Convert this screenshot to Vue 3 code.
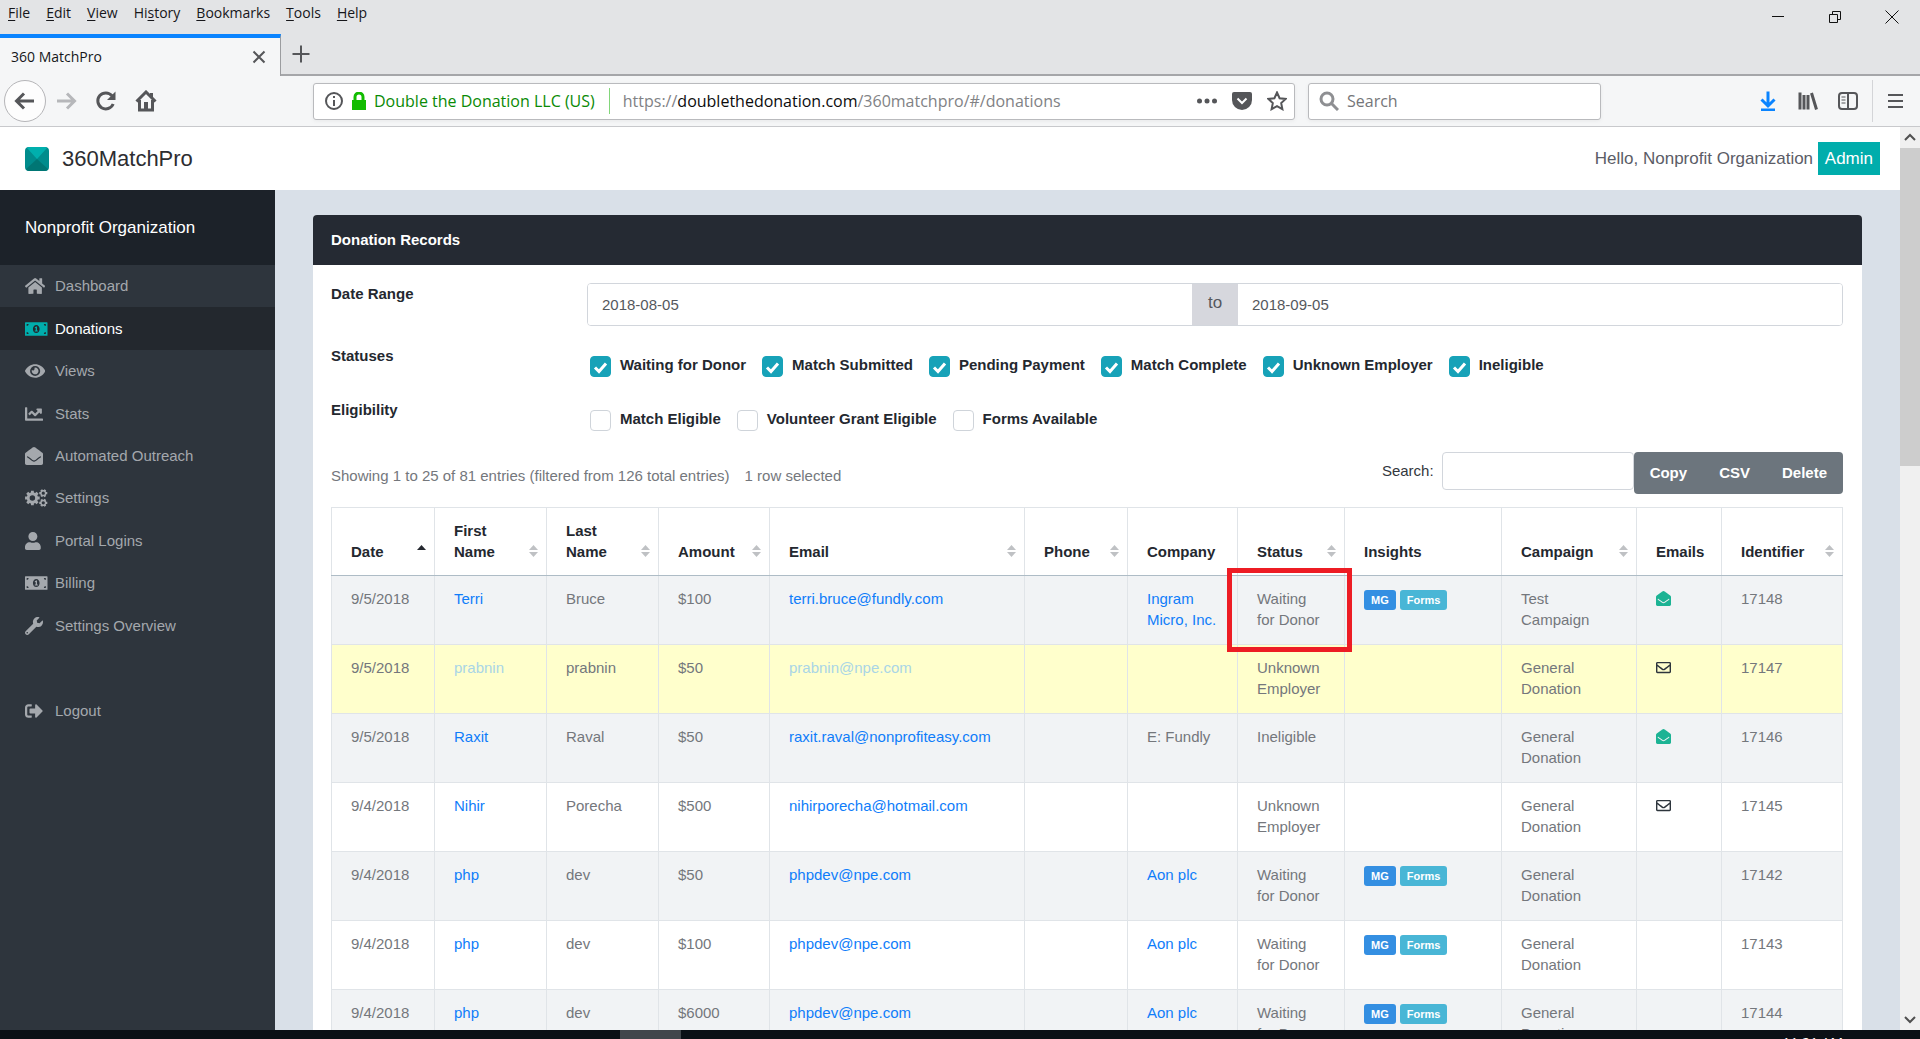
<script setup>
import { ref } from 'vue'

const menus = [
  ['', 'F', 'ile'], ['', 'E', 'dit'], ['', 'V', 'iew'], ['Hi', 's', 'tory'],
  ['', 'B', 'ookmarks'], ['', 'T', 'ools'], ['', 'H', 'elp'],
]

// Outline of a toothed wheel with a round hole, for the settings icon
function gear(cx, cy, r, teeth, hole) {
  const inner = r * 0.76
  const pts = []
  for (let i = 0; i < teeth; i++) {
    const a = (i * 2 * Math.PI) / teeth
    const s = (2 * Math.PI) / teeth
    for (const [rad, off] of [[inner, -0.34], [r, -0.24], [r, 0.24], [inner, 0.34]]) {
      pts.push(`${(cx + rad * Math.cos(a + off * s)).toFixed(1)} ${(cy + rad * Math.sin(a + off * s)).toFixed(1)}`)
    }
  }
  return `M${pts.join('L')}ZM${cx - hole} ${cy}a${hole} ${hole} 0 1 0 ${2 * hole} 0a${hole} ${hole} 0 1 0 ${-2 * hole} 0Z`
}

const billPath = 'M16 64H624Q640 64 640 80V432Q640 448 624 448H16Q0 448 0 432V80Q0 64 16 64ZM48 112V170Q100 165 105 112ZM592 112V170Q540 165 535 112ZM48 400V342Q100 347 105 400ZM592 400V342Q540 347 535 400ZM320 140C265 140 225 190 225 256S265 372 320 372 415 322 415 256 375 140 320 140ZM280 205L320 185H342V300H365V326H278V300H304V224L280 232Z'

const icons = {
  home: { w: 576, d: 'M280.37 148.26L96 300.11V464a16 16 0 0 0 16 16l112.06-.29a16 16 0 0 0 15.92-16V368a16 16 0 0 1 16-16h64a16 16 0 0 1 16 16v95.64a16 16 0 0 0 16 16.05L464 480a16 16 0 0 0 16-16V300L295.67 148.26a12.19 12.19 0 0 0-15.3 0zM571.6 251.47L488 182.56V44.05a12 12 0 0 0-12-12h-56a12 12 0 0 0-12 12v72.61L318.47 43a48 48 0 0 0-61 0L4.34 251.47a12 12 0 0 0-1.6 16.9l25.5 31A12 12 0 0 0 45.15 301l235.22-193.74a12.19 12.19 0 0 1 15.3 0L530.9 301a12 12 0 0 0 16.9-1.6l25.5-31a12 12 0 0 0-1.7-16.93z' },
  bill: { w: 640, d: billPath },
  eye: { w: 576, d: 'M572.52 241.4C518.29 135.59 410.93 64 288 64S57.68 135.64 3.48 241.41a32.35 32.35 0 0 0 0 29.19C57.71 376.41 165.07 448 288 448s230.32-71.64 284.52-177.41a32.35 32.35 0 0 0 0-29.19zM288 400a144 144 0 1 1 144-144 143.93 143.93 0 0 1-144 144zm0-240a95.31 95.31 0 0 0-25.31 3.79 47.85 47.85 0 0 1-66.9 66.9A95.78 95.78 0 1 0 288 160z' },
  chart: { w: 512, d: 'M496 384H64V80c0-8.84-7.16-16-16-16H16C7.16 64 0 71.16 0 80v336c0 17.67 14.33 32 32 32h464c8.84 0 16-7.16 16-16v-32c0-8.84-7.16-16-16-16zM464 96H345.94c-21.38 0-32.09 25.85-16.97 40.97l32.4 32.4L288 242.75l-73.37-73.37c-12.5-12.5-32.76-12.5-45.25 0l-68.69 68.69c-6.25 6.25-6.25 16.38 0 22.63l22.62 22.62c6.25 6.25 16.38 6.25 22.63 0L192 237.25l73.37 73.37c12.5 12.5 32.76 12.5 45.25 0l96-96 32.4 32.4c15.12 15.12 40.97 4.41 40.97-16.97V112c.01-8.84-7.15-16-15.99-16z' },
  mailOpen: { w: 512, d: 'M512 464c0 26.51-21.49 48-48 48H48c-26.51 0-48-21.49-48-48V200.724a48 48 0 0 1 18.387-37.776c24.913-19.529 45.501-35.365 164.2-121.511C199.412 29.17 232.797-.347 256 .003c23.198-.354 56.596 29.172 73.413 41.433 118.687 86.137 139.303 101.995 164.2 121.512A48 48 0 0 1 512 200.724V464zm-65.666-196.605c-2.563-3.728-7.7-4.595-11.339-1.907-22.845 16.873-55.462 40.705-105.582 77.079-16.825 12.266-50.21 41.781-73.413 41.43-23.211.344-56.559-29.143-73.413-41.43-50.114-36.37-82.734-60.204-105.582-77.079-3.639-2.688-8.776-1.821-11.339 1.907l-9.072 13.196a7.998 7.998 0 0 0 1.839 10.967c22.887 16.899 55.454 40.69 105.303 76.868 20.274 14.781 56.524 47.813 92.264 47.573 35.724.242 71.961-32.771 92.263-47.573 49.85-36.179 82.418-59.97 105.303-76.868a7.998 7.998 0 0 0 1.839-10.967l-9.071-13.196z' },
  mail: { w: 512, d: 'M464 64H48C21.49 64 0 85.49 0 112v288c0 26.51 21.49 48 48 48h416c26.51 0 48-21.49 48-48V112c0-26.51-21.49-48-48-48zm0 48v40.805c-22.422 18.259-58.168 46.651-134.587 106.49-16.841 13.247-50.201 45.072-73.413 44.701-23.208.375-56.579-31.459-73.413-44.701C106.18 199.465 70.425 171.067 48 152.805V112h416zM48 400V214.398c22.914 18.251 55.409 43.862 104.938 82.646 21.857 17.205 60.134 55.186 103.062 54.955 42.717.231 80.509-37.199 103.053-54.947 49.528-38.783 82.032-64.401 104.947-82.653V400H48z' },
  cogs: { w: 640, d: gear(210, 256, 212, 8, 78) + gear(520, 118, 118, 6, 46) + gear(520, 394, 118, 6, 46) },
  user: { w: 448, d: 'M224 256c70.7 0 128-57.3 128-128S294.7 0 224 0 96 57.3 96 128s57.3 128 128 128zm89.6 32h-16.7c-22.2 10.2-46.9 16-72.9 16s-50.6-5.8-72.9-16h-16.7C60.2 288 0 348.2 0 422.4V464c0 26.5 21.5 48 48 48h352c26.5 0 48-21.5 48-48v-41.6c0-74.2-60.2-134.4-134.4-134.4z' },
  wrench: { w: 512, d: 'M507.73 109.1c-2.24-9.03-13.54-12.09-20.12-5.51l-74.36 74.36-67.88-11.31-11.31-67.88 74.36-74.36c6.62-6.62 3.43-17.9-5.66-20.16-47.38-11.74-99.55.91-136.58 37.93-39.64 39.64-50.55 97.1-34.05 147.2L18.74 402.76c-24.99 24.99-24.99 65.51 0 90.5 24.99 24.99 65.51 24.99 90.5 0l213.21-213.21c50.12 16.71 107.47 5.68 147.37-34.22 37.07-37.07 49.7-89.32 37.91-136.73zM64 472c-13.25 0-24-10.75-24-24 0-13.26 10.75-24 24-24s24 10.74 24 24c0 13.25-10.75 24-24 24z' },
  logout: { w: 512, d: 'M497 273L329 441c-15 15-41 4.5-41-17v-96H152c-13.3 0-24-10.7-24-24v-96c0-13.3 10.7-24 24-24h136V88c0-21.4 25.9-32 41-17l168 168c9.3 9.4 9.3 24.6 0 34zM192 436v-40c0-6.6-5.4-12-12-12H96c-17.7 0-32-14.3-32-32V160c0-17.7 14.3-32 32-32h84c6.6 0 12-5.4 12-12V76c0-6.6-5.4-12-12-12H96c-53 0-96 43-96 96v192c0 53 43 96 96 96h84c6.6 0 12-5.4 12-12z' },
}

const nav = [
  { label: 'Dashboard', icon: 'home' },
  { label: 'Donations', icon: 'bill', active: true },
  { label: 'Views', icon: 'eye' },
  { label: 'Stats', icon: 'chart' },
  { label: 'Automated Outreach', icon: 'mailOpen' },
  { label: 'Settings', icon: 'cogs' },
  { label: 'Portal Logins', icon: 'user' },
  { label: 'Billing', icon: 'bill' },
  { label: 'Settings Overview', icon: 'wrench' },
  null,
  { label: 'Logout', icon: 'logout' },
]

const dateFrom = ref('2018-08-05')
const dateTo = ref('2018-09-05')
const tableSearch = ref('')

const statuses = ref(['Waiting for Donor', 'Match Submitted', 'Pending Payment', 'Match Complete', 'Unknown Employer', 'Ineligible'].map((label) => ({ label, on: true })))
const eligibility = ref(['Match Eligible', 'Volunteer Grant Eligible', 'Forms Available'].map((label) => ({ label, on: false })))

const columns = [
  { label: 'Date', cls: 'c-date', sort: 'asc' },
  { label: 'First Name', cls: 'c-name', sort: 'both' },
  { label: 'Last Name', cls: 'c-name', sort: 'both' },
  { label: 'Amount', cls: 'c-amount', sort: 'both' },
  { label: 'Email', cls: 'c-email', sort: 'both' },
  { label: 'Phone', cls: 'c-phone', sort: 'both' },
  { label: 'Company', cls: 'c-company' },
  { label: 'Status', cls: 'c-status', sort: 'both' },
  { label: 'Insights', cls: 'c-insights' },
  { label: 'Campaign', cls: 'c-campaign', sort: 'both' },
  { label: 'Emails', cls: 'c-emails' },
  { label: 'Identifier', cls: 'c-id', sort: 'both' },
]

const rows = [
  { date: '9/5/2018', first: 'Terri', last: 'Bruce', amount: '$100', email: 'terri.bruce@fundly.com', company: 'Ingram Micro, Inc.', link: true, status: 'Waiting for Donor', forms: true, campaign: 'Test Campaign', mail: 'mailOpen', id: '17148', marked: true },
  { date: '9/5/2018', first: 'prabnin', last: 'prabnin', amount: '$50', email: 'prabnin@npe.com', company: '', status: 'Unknown Employer', campaign: 'General Donation', mail: 'mail', id: '17147', selected: true },
  { date: '9/5/2018', first: 'Raxit', last: 'Raval', amount: '$50', email: 'raxit.raval@nonprofiteasy.com', company: 'E: Fundly', status: 'Ineligible', campaign: 'General Donation', mail: 'mailOpen', id: '17146' },
  { date: '9/4/2018', first: 'Nihir', last: 'Porecha', amount: '$500', email: 'nihirporecha@hotmail.com', company: '', status: 'Unknown Employer', campaign: 'General Donation', mail: 'mail', id: '17145' },
  { date: '9/4/2018', first: 'php', last: 'dev', amount: '$50', email: 'phpdev@npe.com', company: 'Aon plc', link: true, status: 'Waiting for Donor', forms: true, campaign: 'General Donation', id: '17142' },
  { date: '9/4/2018', first: 'php', last: 'dev', amount: '$100', email: 'phpdev@npe.com', company: 'Aon plc', link: true, status: 'Waiting for Donor', forms: true, campaign: 'General Donation', id: '17143' },
  { date: '9/4/2018', first: 'php', last: 'dev', amount: '$6000', email: 'phpdev@npe.com', company: 'Aon plc', link: true, status: 'Waiting for Donor', forms: true, campaign: 'General Donation', id: '17144' },
]
</script>

<template>
  <div class="screen">
    <header class="chrome">
      <div class="titlebar">
        <nav class="menubar">
          <button v-for="m in menus" :key="m.join('')" type="button">{{ m[0] }}<u>{{ m[1] }}</u>{{ m[2] }}</button>
        </nav>
        <div class="win-controls">
          <button type="button" aria-label="Minimize"><svg width="14" height="14" viewBox="0 0 14 14"><path d="M1 6.500h12" /></svg></button>
          <button type="button" aria-label="Restore"><svg width="14" height="14" viewBox="0 0 14 14"><path d="M1.500 4.500h8v8h-8zM4.500 4.500v-3h8v8h-3" /></svg></button>
          <button type="button" aria-label="Close"><svg width="14" height="14" viewBox="0 0 14 14"><path d="M0.500 0.500l13 13M13.500 0.500l-13 13" /></svg></button>
        </div>
      </div>

      <div class="tabs">
        <div class="tab">
          <span>360 MatchPro</span>
          <button type="button" aria-label="Close tab"><svg width="14" height="14" viewBox="0 0 14 14"><path d="M1.500 1.500l11 11M12.500 1.500l-11 11" /></svg></button>
        </div>
        <div class="tab-rest">
          <button type="button" aria-label="New tab"><svg width="18" height="18" viewBox="0 0 18 18"><path d="M9 0.500v17M0.500 9h17" /></svg></button>
        </div>
      </div>

      <div class="toolbar">
        <div class="nav-buttons">
          <button class="back" type="button" aria-label="Back"><svg width="22" height="22" viewBox="0 0 22 22"><path d="M20 11H3M10 3.500L2.500 11l7.500 7.500" /></svg></button>
          <button class="dim" type="button" aria-label="Forward"><svg width="22" height="22" viewBox="0 0 22 22"><path d="M2 11h17M12 3.500l7.500 7.500-7.500 7.500" /></svg></button>
          <button type="button" aria-label="Reload"><svg width="22" height="22" viewBox="0 0 22 22"><path d="M18.200 14A8 8 0 1 1 17 5.800" /><path class="solid" d="M20.500 1.500v8.500H12z" /></svg></button>
          <button type="button" aria-label="Home"><svg width="22" height="22" viewBox="0 0 22 22"><path d="M1.500 11.500L11 2l9.500 9.500M4.500 10v10h13V10M16.500 7V3" /><path class="solid" d="M9 12h4v8H9z" /></svg></button>
        </div>

        <div class="urlbar">
          <svg class="info" width="18" height="18" viewBox="0 0 18 18"><circle cx="9" cy="9" r="8" /><path d="M9 8v6M9 4v2" /></svg>
          <svg class="lock" width="16" height="18" viewBox="0 0 16 18"><path d="M1 8h14v10H1z" /><path class="shackle" d="M4 9V5a4 4 0 0 1 8 0v4" /></svg>
          <span class="owner">Double the Donation LLC (US)</span>
          <span class="url">https://<b>doublethedonation.com</b>/360matchpro/#/donations</span>
          <div class="url-actions">
            <button type="button" aria-label="Page actions"><svg width="20" height="20" viewBox="0 0 20 20"><g class="solid"><circle cx="2.500" cy="10" r="2.500" /><circle cx="10" cy="10" r="2.500" /><circle cx="17.500" cy="10" r="2.500" /></g></svg></button>
            <button type="button" aria-label="Save to Pocket"><svg width="20" height="20" viewBox="0 0 20 20"><path class="solid" d="M2 1h16q2 0 2 2v6a10 10 0 0 1-20 0V3q0-2 2-2z" /><path class="tick" d="M5.500 7.500L10 12l4.500-4.500" /></svg></button>
            <button type="button" aria-label="Bookmark"><svg width="20" height="20" viewBox="0 0 20 20"><path d="M10 1.500l2.600 5.700 6.100.7-4.500 4.200 1.200 6.100L10 15.200l-5.400 3 1.200-6.100L1.300 7.900l6.100-.7z" /></svg></button>
          </div>
        </div>

        <label class="searchbar">
          <svg width="20" height="20" viewBox="0 0 20 20"><circle cx="8" cy="8" r="6" /><path d="M12.500 12.500L19 19" /></svg>
          <input type="text" placeholder="Search" aria-label="Web search" />
        </label>

        <div class="tools">
          <button class="download" type="button" aria-label="Downloads"><svg width="20" height="20" viewBox="0 0 20 20"><path d="M10 0.500V14M3.500 8.500l6.500 6.500 6.500-6.500M3 19h14" /></svg></button>
          <button type="button" aria-label="Library"><svg width="20" height="20" viewBox="0 0 20 20"><path class="bold" d="M2 1.500v17M6 4v14.500M10 4v14.500M13.500 2l5 16.500" /></svg></button>
          <button type="button" aria-label="Sidebars"><svg width="20" height="20" viewBox="0 0 20 20"><rect x="1" y="2" width="18" height="16" rx="3" /><path d="M10 2v16" /><path class="thin" d="M3.500 6h4M3.500 9h4M3.500 12h4" /></svg></button>
          <button class="burger" type="button" aria-label="Menu"><svg width="18" height="18" viewBox="0 0 18 18"><path d="M1 3h15M1 9h15M1 15h15" /></svg></button>
        </div>
      </div>
    </header>

    <div class="viewport">
      <div class="page">
        <header class="site-head">
          <a class="brand" href="#">
            <svg width="24" height="24" viewBox="0 0 24 24"><rect width="24" height="24" rx="4" fill="#008c8c" /><path d="M2 1L12 12 22 1Q21 0 20 0H4Q3 0 2 1Z" fill="#00afad" /><path d="M1 22L12 12 23 22Q22 24 20 24H4Q2 24 1 22Z" fill="#007674" /></svg>
            360MatchPro
          </a>
          <div class="hello">Hello, Nonprofit Organization <a class="admin" href="#">Admin</a></div>
        </header>

        <div class="columns">
          <aside class="sidebar">
            <h2>Nonprofit Organization</h2>
            <ul>
              <li v-for="(item, i) in nav" :key="i">
                <a v-if="item" href="#" :class="{ active: item.active }">
                  <span class="nav-icon">
                    <svg height="18" :viewBox="`0 0 ${icons[item.icon].w} 512`"><path fill-rule="evenodd" :d="icons[item.icon].d" /></svg>
                  </span>
                  {{ item.label }}
                </a>
              </li>
            </ul>
          </aside>

          <main>
            <section class="card">
              <h1>Donation Records</h1>
              <div class="card-body">
                <div class="field">
                  <label for="from">Date Range</label>
                  <div class="range">
                    <input id="from" v-model="dateFrom" type="text" />
                    <span>to</span>
                    <input v-model="dateTo" type="text" aria-label="End date" />
                  </div>
                </div>
                <div class="field checks">
                  <span class="legend">Statuses</span>
                  <div class="options">
                    <label v-for="s in statuses" :key="s.label"><input v-model="s.on" type="checkbox" />{{ s.label }}</label>
                  </div>
                </div>
                <div class="field checks">
                  <span class="legend">Eligibility</span>
                  <div class="options">
                    <label v-for="s in eligibility" :key="s.label"><input v-model="s.on" type="checkbox" />{{ s.label }}</label>
                  </div>
                </div>

                <div class="table-tools">
                  <p>Showing 1 to 25 of 81 entries (filtered from 126 total entries)<span>1 row selected</span></p>
                  <div class="finder">
                    <label for="find">Search:</label>
                    <input id="find" v-model="tableSearch" type="text" />
                    <div class="actions">
                      <button type="button">Copy</button>
                      <button type="button">CSV</button>
                      <button type="button">Delete</button>
                    </div>
                  </div>
                </div>

                <table>
                  <thead>
                    <tr>
                      <th v-for="c in columns" :key="c.label" :class="c.cls">
                        <div class="th">
                          <span>{{ c.label }}</span>
                          <svg v-if="c.sort" :class="c.sort" width="9" height="12" viewBox="0 0 9 12"><path d="M0 5L4.500 0 9 5z" /><path class="down" d="M0 7h9L4.500 12z" /></svg>
                        </div>
                      </th>
                    </tr>
                  </thead>
                  <tbody>
                    <tr v-for="r in rows" :key="r.id" :class="{ selected: r.selected }">
                      <td>{{ r.date }}</td>
                      <td><a href="#">{{ r.first }}</a></td>
                      <td>{{ r.last }}</td>
                      <td>{{ r.amount }}</td>
                      <td><a href="#">{{ r.email }}</a></td>
                      <td></td>
                      <td class="company"><a v-if="r.link" href="#">{{ r.company }}</a><template v-else>{{ r.company }}</template></td>
                      <td class="status">{{ r.status }}<span v-if="r.marked" class="marker"></span></td>
                      <td>
                        <div v-if="r.forms" class="badges"><span class="mg">MG</span><span class="forms">Forms</span></div>
                      </td>
                      <td>{{ r.campaign }}</td>
                      <td>
                        <svg v-if="r.mail" class="mail" :class="r.mail" width="15" height="15" viewBox="0 0 512 512"><path :d="icons[r.mail].d" /></svg>
                      </td>
                      <td>{{ r.id }}</td>
                    </tr>
                  </tbody>
                </table>
              </div>
            </section>
          </main>
        </div>
      </div>

      <div class="scrollbar">
        <svg width="20" height="21" viewBox="0 0 20 21"><path d="M5 13l5-5 5 5" /></svg>
        <div class="thumb"></div>
        <svg width="20" height="21" viewBox="0 0 20 21"><path d="M5 8l5 5 5-5" /></svg>
      </div>
    </div>

    <footer class="taskbar">
      <span class="task"></span>
      <time>11:21 AM</time>
    </footer>
  </div>
</template>

<style>
body {
  margin: 0;
}
</style>

<style scoped>
* {
  box-sizing: border-box;
}
.screen {
  display: flex;
  flex-direction: column;
  height: 100vh;
  overflow: hidden;
  font-family: "Liberation Sans", Arial, sans-serif;
  font-size: 15px;
  line-height: 22px;
  color: #74777c;
  background: #fff;
}
button {
  border: 0;
  padding: 0;
  background: none;
  font: inherit;
  color: inherit;
}
input {
  font: inherit;
  color: inherit;
}
a {
  color: #0f7dfa;
  text-decoration: none;
}
svg {
  display: block;
}

/* Browser window */
.chrome {
  flex: none;
  font-family: "Open Sans", "Noto Sans", sans-serif;
  color: #16161a;
  background: #e3e4e6;
}
.chrome svg {
  fill: none;
  stroke: #555659;
  stroke-width: 2;
}
.chrome .solid {
  fill: #555659;
  stroke: none;
}
.titlebar {
  display: flex;
  justify-content: space-between;
  height: 34px;
}
.menubar {
  display: flex;
  gap: 16px;
  padding: 2px 0 0 8px;
  height: 24px;
  font-size: 14px;
}
.menubar u {
  text-underline-offset: 2px;
}
.win-controls {
  display: flex;
  gap: 43px;
  padding: 0 21px 0 0;
}
.win-controls svg {
  stroke: #111;
  stroke-width: 1;
}
.tabs {
  display: flex;
  height: 42px;
}
.tab {
  display: flex;
  align-items: center;
  justify-content: space-between;
  flex: none;
  width: 281px;
  padding: 0 14px 0 11px;
  border-top: 4px solid #0a84ff;
  border-right: 1px solid #9b9c9f;
  background: #f5f6f7;
  font-size: 14px;
}
.tab-rest {
  display: flex;
  align-items: center;
  flex: 1;
  padding-left: 11px;
  border-bottom: 2px solid #a5a6a9;
}
.toolbar {
  display: flex;
  align-items: center;
  height: 51px;
  border-bottom: 1px solid #c8c9cc;
  background: #f5f6f7;
}
.nav-buttons {
  display: flex;
  align-items: center;
  gap: 18px;
  flex: none;
  width: 313px;
  padding-left: 4px;
}
.nav-buttons .back {
  display: grid;
  place-items: center;
  width: 42px;
  height: 42px;
  margin-right: -9px;
  border: 1px solid #b5b5b8;
  border-radius: 50%;
  background: #fdfdfd;
}
.nav-buttons svg {
  stroke-width: 3;
}
.nav-buttons .dim svg {
  stroke: #b6b7ba;
}
.urlbar,
.searchbar {
  display: flex;
  align-items: center;
  height: 37px;
  border: 1px solid #b9babd;
  border-radius: 3px;
  background: #fff;
  box-shadow: 0 1px 4px rgba(0, 0, 0, 0.06);
  font-size: 16px;
}
.urlbar {
  flex: 1;
  padding: 0 7px 0 11px;
}
.urlbar .info {
  stroke-width: 2;
}
.urlbar .lock {
  margin: 0 7px 0 8px;
  fill: #12bc00;
  stroke: none;
}
.urlbar .lock .shackle {
  fill: none;
  stroke: #12bc00;
  stroke-width: 3;
}
.owner {
  padding-right: 14px;
  border-right: 1px solid #82d67a;
  line-height: 26px;
  color: #0a8a05;
  white-space: nowrap;
}
.url {
  padding-left: 13px;
  color: #818285;
  white-space: nowrap;
}
.url b {
  font-weight: 400;
  color: #0c0c0d;
}
.url-actions {
  display: flex;
  gap: 15px;
  margin-left: auto;
}
.url-actions .tick {
  stroke: #fff;
}
.searchbar {
  flex: none;
  width: 293px;
  margin-left: 13px;
  padding-left: 10px;
}
.searchbar svg {
  stroke: #8e8f92;
  stroke-width: 3;
}
.searchbar input {
  width: 200px;
  padding: 0 0 0 8px;
  border: 0;
  outline: 0;
  background: none;
}
.searchbar input::placeholder {
  color: #757679;
  opacity: 1;
}
.tools {
  display: flex;
  align-items: center;
  justify-content: flex-end;
  gap: 20px;
  flex: none;
  width: 319px;
  padding-right: 15px;
}
.tools svg {
  stroke-width: 2;
}
.tools .bold {
  stroke-width: 3;
}
.tools .download svg {
  stroke: #0a84ff;
  stroke-width: 3;
}
.tools .thin {
  stroke-width: 1;
}
.tools .burger {
  margin-left: -6px;
  padding: 12px 0 12px 14px;
  border-left: 1px solid #d4d5d8;
}

/* Web page */
.viewport {
  display: flex;
  flex: 1;
  min-height: 0;
  overflow: hidden;
}
.page {
  display: flex;
  flex-direction: column;
  flex: 1;
  min-width: 0;
  background: #d9e0e8;
}
.site-head {
  display: flex;
  align-items: center;
  justify-content: space-between;
  flex: none;
  height: 63px;
  padding: 0 20px 0 25px;
  background: #fff;
}
.brand {
  display: flex;
  align-items: center;
  gap: 13px;
  font-size: 22px;
  color: #2d2d31;
}
.hello {
  font-size: 17px;
  color: #5b5c66;
}
.admin {
  display: inline-block;
  padding: 0 7px;
  line-height: 33px;
  color: #fff;
  background: #00adac;
}
.columns {
  display: flex;
  flex: 1;
  min-height: 0;
}
.sidebar {
  flex: none;
  width: 275px;
  background: #2e353d;
}
.sidebar h2 {
  margin: 0;
  padding: 0 25px;
  font-size: 17px;
  font-weight: 400;
  line-height: 75px;
  color: #fff;
  background: #1c2229;
}
.sidebar ul {
  display: flex;
  flex-direction: column;
  height: 467px;
  margin: 0;
  padding: 0;
  list-style: none;
}
.sidebar li {
  display: flex;
  flex: 1;
}
.sidebar a {
  display: flex;
  align-items: center;
  flex: 1;
  padding-left: 25px;
  color: #a4a8ad;
}
.sidebar a.active {
  color: #fff;
  background: #23282e;
}
.nav-icon {
  width: 30px;
}
.nav-icon svg {
  fill: currentColor;
}
.active .nav-icon {
  color: #00adac;
}
main {
  flex: 1;
  min-width: 0;
  padding: 25px 38px 0;
  overflow: hidden;
}
.card {
  border-radius: 4px 4px 0 0;
  overflow: hidden;
  background: #fff;
}
.card h1 {
  margin: 0;
  padding: 0 18px;
  font-size: 15px;
  line-height: 50px;
  color: #fff;
  background: #252a33;
}
.card-body {
  padding: 18px 19px 18px 18px;
}
.field {
  display: flex;
  height: 51px;
  font-weight: 700;
  color: #24282f;
}
.field > :first-child {
  flex: none;
  width: 256px;
}
.checks {
  height: 54px;
}
.checks .legend {
  padding-top: 11px;
}
.range {
  display: flex;
  flex: 1;
  height: 43px;
  border: 1px solid #d2d6dc;
  border-radius: 4px;
  overflow: hidden;
  font-weight: 400;
  color: #55585d;
}
.range input {
  flex: 1;
  min-width: 0;
  padding: 0 14px;
  border: 0;
  outline: 0;
}
.range span {
  width: 46px;
  font-size: 17px;
  line-height: 38px;
  text-align: center;
  background: #d6d7dd;
}
.options {
  display: flex;
  gap: 16px;
  flex: 1;
  padding: 11px 0 0 3px;
}
.options label {
  display: flex;
  height: 32px;
  padding-top: 9px;
  white-space: nowrap;
}
.options input {
  appearance: none;
  width: 21px;
  height: 21px;
  margin: 2px 9px 0 0;
  border: 1px solid #cfd4da;
  border-radius: 4px;
  background: #fff center / 17px no-repeat;
}
.options input:checked {
  border-color: #17a2b8;
  background-color: #17a2b8;
  background-image: url("data:image/svg+xml,%3Csvg xmlns='http://www.w3.org/2000/svg' viewBox='0 0 17 17'%3E%3Cpath d='M3 9.500l4 4 7-8' fill='none' stroke='%23fff' stroke-width='3'/%3E%3C/svg%3E");
}
.table-tools {
  display: flex;
  justify-content: space-between;
  height: 65px;
  padding-top: 10px;
}
.table-tools p {
  margin: 0;
  padding-top: 13px;
}
.table-tools p span {
  margin-left: 15px;
}
.finder {
  display: flex;
  align-items: flex-start;
}
.finder label {
  padding: 8px 8px 0 0;
  color: #33373d;
}
.finder input {
  width: 192px;
  height: 38px;
  border: 1px solid #d2d6dc;
  border-radius: 4px;
}
.actions {
  display: flex;
  border-radius: 4px;
  background: #6c757d;
}
.actions button {
  padding: 0 16px;
  font-weight: 700;
  line-height: 42px;
  color: #fff;
}

/* Donations table */
table {
  width: 100%;
  table-layout: fixed;
  border-collapse: collapse;
  line-height: 21px;
}
th,
td {
  height: 69px;
  padding: 12px 19px;
  border: 1px solid #e0e4e8;
  text-align: left;
  vertical-align: top;
}
th {
  height: 68px;
  padding-right: 8px;
  padding-bottom: 13px;
  border-bottom-color: #aebcc6;
  vertical-align: bottom;
  color: #24282f;
}
tbody tr:nth-child(odd) {
  background: #f1f3f5;
}
tbody tr.selected {
  background: #ffffcc;
}
.selected a {
  color: #a9d5e6;
}
.th {
  display: flex;
  align-items: flex-end;
  justify-content: space-between;
}
.th svg {
  flex: none;
  margin-bottom: 5px;
  fill: #bfc1c4;
}
.th svg.asc {
  fill: #24282f;
}
.th svg.asc .down {
  fill: none;
}
.c-date { width: 103px; }
.c-name { width: 112px; }
.c-amount { width: 111px; }
.c-phone { width: 103px; }
.c-company { width: 110px; }
.c-status { width: 107px; }
.c-insights { width: 157px; }
.c-campaign { width: 135px; }
.c-emails { width: 85px; }
.c-id { width: 121px; }
td.company {
  padding-right: 8px;
}
td.status {
  position: relative;
}
.marker {
  position: absolute;
  top: -8px;
  left: -11px;
  width: 125px;
  height: 84px;
  border: 5px solid #ed1c24;
}
.badges {
  display: flex;
  gap: 4px;
  padding-top: 2px;
}
.badges span {
  padding: 0 7px;
  border-radius: 3px;
  font-size: 11px;
  font-weight: 700;
  line-height: 20px;
  color: #fff;
}
.badges .mg {
  background: #348fe2;
}
.badges .forms {
  background: #49b6d6;
}
.mail {
  margin-top: 3px;
  fill: #2d353c;
}
.mail.mailOpen {
  fill: #1cb394;
}

/* Scrollbar and taskbar */
.scrollbar {
  display: flex;
  flex-direction: column;
  flex: none;
  width: 20px;
  background: #f0f0f0;
}
.scrollbar svg {
  fill: none;
  stroke: #505050;
  stroke-width: 2;
}
.thumb {
  height: 318px;
  background: #cdcdcd;
}
.scrollbar svg:last-child {
  margin-top: auto;
}
.taskbar {
  display: flex;
  justify-content: space-between;
  flex: none;
  height: 9px;
  padding-right: 77px;
  overflow: hidden;
  color: #fff;
  background: #0b1016;
}
.task {
  width: 61px;
  height: 9px;
  margin-left: 620px;
  background: #41464b;
}
.taskbar time {
  padding-top: 2px;
  font-family: "Open Sans", sans-serif;
  font-size: 14px;
}
</style>
